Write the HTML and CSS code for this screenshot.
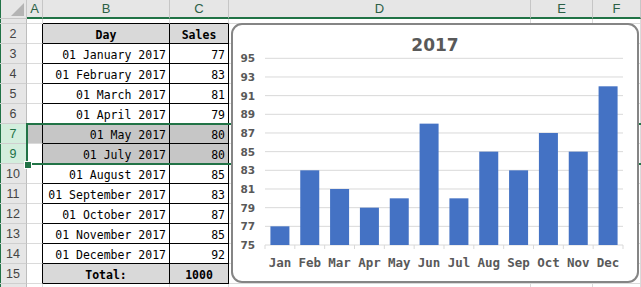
FILE: index.html
```html
<!DOCTYPE html>
<html lang="en">
<head>
    <meta charset="UTF-8">
    <title>Sales 2017</title>
    <link rel="stylesheet" href="styles.css">
</head>
<body>
    <div class="sheet">
        <div class="grid" id="grid"></div>
        <div class="selection"><span class="handle"></span></div>
        <div class="chart">
            <svg id="chart" width="404" height="256" viewBox="233 25 404 256"></svg>
        </div>
    </div>
    <script>
        const grid = document.getElementById('grid');
        const data = {
            2: ['Day', 'Sales'],
            3: ['01 January 2017', 77],
            4: ['01 February 2017', 83],
            5: ['01 March 2017', 81],
            6: ['01 April 2017', 79],
            7: ['01 May 2017', 80],
            9: ['01 July 2017', 80],
            10: ['01 August 2017', 85],
            11: ['01 September 2017', 83],
            12: ['01 October 2017', 87],
            13: ['01 November 2017', 85],
            14: ['01 December 2017', 92],
            15: ['Total:', 1000]
        };
        const rows = [1, 2, 3, 4, 5, 6, 7, 9, 10, 11, 12, 13, 14, 15, 16];

        function cell(cls, text) {
            const d = document.createElement('div');
            d.className = cls;
            if (text !== undefined) d.textContent = text;
            grid.appendChild(d);
            return d;
        }

        cell('corner').innerHTML = '<span class="tri"></span>';
        ['A', 'B', 'C', 'D', 'E', 'F'].forEach(l => cell('colhead', l));

        rows.forEach(r => {
            const sel = r === 7 || r === 9;
            const inTable = r >= 2 && r <= 15;
            // row 1 is squashed and row 16 only peeks in, so no labels there
            cell('rowhead' + (sel ? ' sel' : ''), (r === 1 || r === 16) ? '' : r);
            cell('cell' + (inTable ? ' edge' : '') + (r === 7 ? ' shade' : ''));
            const d = data[r] || ['', ''];
            let cls = 'cell';
            if (inTable) cls += ' tbl';
            if (r === 1) cls += ' above';
            if (r === 2 || r === 15) cls += ' head';
            if (sel) cls += ' shade';
            cell(cls, d[0]);
            cell(cls, d[1]);
            cell('cell');
            cell('cell');
            cell('cell');
        });

        // chart, drawn in page coordinates
        const months = ['Jan', 'Feb', 'Mar', 'Apr', 'May', 'Jun', 'Jul', 'Aug', 'Sep', 'Oct', 'Nov', 'Dec'];
        const sales = [77, 83, 81, 79, 80, 88, 80, 85, 83, 87, 85, 92];
        const x0 = 265, x1 = 623, base = 245, unit = 9.335;
        const step = (x1 - x0) / 12;
        const yOf = v => base - (v - 75) * unit;
        let svg = '<text class="title" x="435" y="51" text-anchor="middle">2017</text>';

        for (let v = 75; v <= 95; v += 2) {
            const y = yOf(v);
            svg += `<line class="grid-line" x1="${x0}" x2="${x1}" y1="${y}" y2="${y}"/>`;
            svg += `<text class="ylab" x="255" y="${y + 4}" text-anchor="end">${v}</text>`;
        }
        for (let k = 0; k <= 12; k++) {
            const x = x0 + step * k;
            svg += `<line class="grid-line" x1="${x}" x2="${x}" y1="${base}" y2="${base + 4}"/>`;
        }
        sales.forEach((v, i) => {
            const cx = x0 + step * (i + 0.5);
            svg += `<rect class="bar" x="${cx - 9.5}" y="${yOf(v)}" width="19" height="${base - yOf(v)}"/>`;
            svg += `<text class="xlab" x="${cx}" y="267" text-anchor="middle">${months[i]}</text>`;
        });
        document.getElementById('chart').innerHTML = svg;
    </script>
</body>
</html>
```

FILE: styles.css
```css
* {
    box-sizing: border-box;
}
html, body {
    margin: 0;
    padding: 0;
    overflow: hidden;
    background: #fff;
}
body {
    font-family: 'Liberation Sans', Arial, sans-serif;
}
.sheet {
    position: relative;
    width: 641px;
    height: 287px;
    overflow: hidden;
}
.grid {
    display: grid;
    grid-template-columns: 27px 16px 127px 59px 302px 62px 48px;
    grid-template-rows: 19px 5px repeat(14, 20px);
}
.corner {
    position: relative;
    background: #e6e6e6;
    border-right: 1px solid #c6c6c6;
    border-bottom: 1px solid #c6c6c6;
    box-shadow: inset 1px 0 0 #217346;
}
.tri {
    position: absolute;
    right: 2px;
    bottom: 2px;
    width: 13px;
    height: 13px;
    background: #b4b4b4;
    clip-path: polygon(100% 0, 100% 100%, 0 100%);
}
.colhead {
    background: #e6e6e6;
    border-right: 1px solid #c6c6c6;
    border-bottom: 2px solid #217346;
    color: #2b5f45;
    font-size: 13px;
    text-align: center;
    line-height: 18px;
}
.rowhead {
    background: #e6e6e6;
    border-right: 1px solid #bdbdbd;
    border-bottom: 1px solid #cfcfcf;
    box-shadow: inset 1px 0 0 #217346;
    color: #444;
    font-size: 12.5px;
    text-align: center;
    line-height: 20px;
}
.rowhead.sel {
    background: #d3eedd;
    color: #217346;
}
.cell {
    display: flex;
    align-items: center;
    justify-content: flex-end;
    padding: 2px 3px 0 0;
    border-right: 1px solid #dadada;
    border-bottom: 1px solid #dadada;
    font-family: 'DejaVu Sans Mono', 'Liberation Mono', monospace;
    font-size: 11.5px;
    color: #000;
    white-space: nowrap;
    overflow: hidden;
}
.cell.edge {
    border-right-color: #000;
}
.cell.above {
    border-bottom-color: #000;
}
.cell.tbl {
    border-right-color: #000;
    border-bottom-color: #000;
}
.cell.head {
    justify-content: center;
    padding-right: 0;
    background: #d9d9d9;
    font-weight: bold;
}
.cell.shade {
    background: #c6c6c6;
}
.selection {
    position: absolute;
    left: 26px;
    top: 123px;
    width: 700px;
    height: 42px;
    border: 2px solid #217346;
}
.handle {
    position: absolute;
    left: -3px;
    bottom: -5px;
    width: 6px;
    height: 6px;
    background: #217346;
    outline: 1px solid #fff;
}
.chart {
    position: absolute;
    left: 231px;
    top: 23px;
    width: 408px;
    height: 260px;
    background: #fff;
    border: 2px solid #858585;
    border-radius: 11px;
    overflow: hidden;
}
.chart svg {
    display: block;
}
.title {
    font-family: 'DejaVu Sans', Verdana, sans-serif;
    font-weight: bold;
    font-size: 17px;
    fill: #595959;
}
.grid-line {
    stroke: #d9d9d9;
    stroke-width: 1;
}
.ylab {
    font-family: 'DejaVu Sans', Verdana, sans-serif;
    font-weight: bold;
    font-size: 10.5px;
    fill: #595959;
}
.xlab {
    font-family: 'DejaVu Sans Mono', monospace;
    font-weight: bold;
    font-size: 12.5px;
    fill: #595959;
}
.bar {
    fill: #4472c4;
}
```
